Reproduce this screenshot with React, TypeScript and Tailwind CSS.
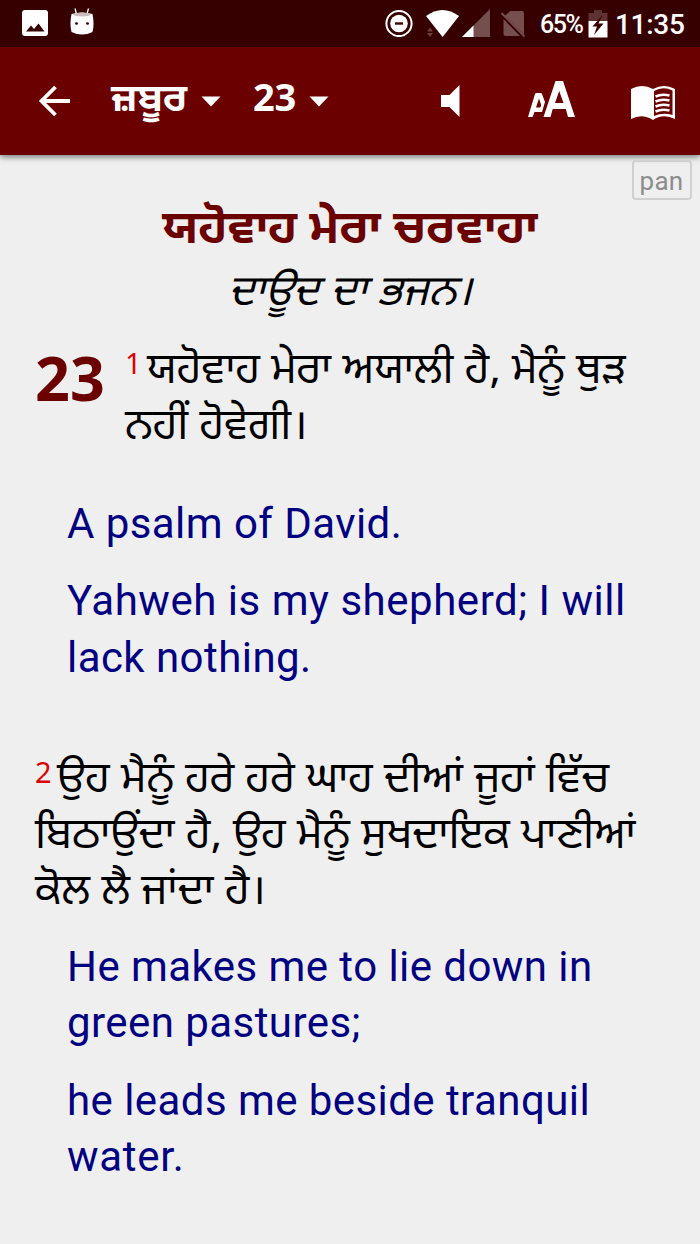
const Caret = () => (
    <svg className="block h-[11px] w-5" viewBox="0 0 20 11" fill="white">
        <path d="M0.5 0.5h19L10 10.5z" />
    </svg>
);

const StatusBar = () => (
    <div className="flex h-[47px] items-start bg-[#370000] text-white">
        <svg className="ml-[22px] mt-[10px] h-[26px] w-[26px]" viewBox="0 0 26 26">
            <rect width="26" height="26" rx="3" fill="white" />
            <path d="M4 21.500l5-6 3 3.500 4.500-5.500 6 8z" fill="#370000" />
        </svg>
        <svg className="ml-[22px] mt-2 h-[27px] w-6" viewBox="0 0 24 27" fill="white">
            <path d="M6.500 6L5 .5M17 6L18.500 .5" stroke="white" strokeWidth="1.300" />
            <path d="M1.500 6Q12 3 22.500 6Q24.500 16 22.500 24Q12 29 1.500 24Q-.5 16 1.500 6z" />
            <path d="M3 6Q12 3 21 6Q20 8.500 12 8.500Q4 8.500 3 6z" fill="#cbbcbc" />
            <ellipse cx="6.500" cy="15.500" rx="1.500" ry="1.300" fill="#370000" />
            <ellipse cx="17.500" cy="15.500" rx="1.500" ry="1.300" fill="#370000" />
        </svg>
        <svg className="ml-[291px] mt-[9px] h-7 w-7" viewBox="0 0 28 28" fill="white">
            <circle cx="14" cy="14.500" r="12.600" fill="none" stroke="white" strokeWidth="2" />
            <circle cx="14" cy="14.500" r="8.800" />
            <path d="M10 14.500h8" stroke="#370000" strokeWidth="2.400" />
        </svg>
        <svg className="ml-3 mt-[9px] h-[29px] w-[35px]" viewBox="0 0 35 29">
            <path d="M1 7Q17.500-5 34 7L17.600 28z" fill="white" />
            <path d="M2 22.500l3-4 3 4zM2 24l3 4 3-4z" fill="#6b4242" />
        </svg>
        <svg className="ml-[2px] mt-[9px] h-7 w-7" viewBox="0 0 28 28">
            <path d="M28 0v28H0z" fill="#754e4e" />
            <path d="M11.500 16.500V28H0z" fill="white" />
        </svg>
        <svg className="ml-[10px] mt-[10px] h-7 w-[26px]" viewBox="0 0 26 28">
            <path d="M10.500 1h11.500q2 0 2 2v21.500L5 5.500zM3.500 9v15q0 2 2 2H20z" fill="#754e4e" />
            <path d="M1.500 3l23 23.500" stroke="#754e4e" strokeWidth="2" />
        </svg>
        <span className="ml-[14px] mt-[9px] w-[43px] whitespace-nowrap font-['Roboto'] text-[25px] font-medium leading-8 tracking-[-1.4px]">65%</span>
        <svg className="ml-[5px] mt-[9px] h-[29px] w-5" viewBox="0 0 20 29">
            <path d="M.5 12V4H6V1h8v3h5.500v8z" fill="#5e3232" />
            <path d="M.5 12h19v16.500H.5z" fill="white" />
            <path d="M14.500 6L4.500 17.500H9L6 26l9.500-11.500h-5z" fill="#370000" />
        </svg>
        <span className="ml-[7px] mt-[9px] whitespace-nowrap font-['Roboto'] text-[28px] font-medium leading-8 tracking-[-0.3px]">11:35</span>
    </div>
);

const Toolbar = () => (
    <div className="relative flex h-[108px] items-start bg-[#6b0000] text-white shadow-[0_2px_6px_rgba(0,0,0,0.5)]">
        <svg className="ml-[38px] mt-[38px] h-8 w-8" viewBox="0 0 32 32" fill="none" stroke="white" strokeWidth="3.800">
            <path d="M32 16H4M17.500 2L3.500 16L17.500 30" />
        </svg>
        <span className="ml-[41px] mt-[27px] w-[78px] whitespace-nowrap font-['Noto_Sans_Gurmukhi','Noto_Sans',sans-serif] text-[39px] font-bold leading-[56px]">ਜ਼ਬੂਰ</span>
        <div className="ml-3 mt-[49px]"><Caret /></div>
        <span className="ml-[32px] mt-[21px] w-[44px] font-['Noto_Sans',sans-serif] text-[38px] font-bold leading-[56px] tracking-[-0.3px]">23</span>
        <div className="ml-[12px] mt-[49px]"><Caret /></div>
        <svg className="ml-[112px] mt-[38px] h-8 w-[19px]" viewBox="0 0 19 32" fill="white">
            <path d="M0 10h8.500L18.500 0v32L8.500 22H0z" />
        </svg>
        <svg className="ml-[68px] mt-[34px] h-9 w-[47px]" viewBox="0 0 47 36" fill="white" fillRule="evenodd">
            <path d="M0 36L7 13q.3-1 1.500-1h4q1.200 0 1.500 1l3 8L14 31H6.500L4.500 36zM8 26.500h4q1.500-1 1-3l-2-6z" />
            <path d="M15.500 36L27.500 0h7.500L47 36h-7l-2.200-8H24.700l-2.200 8zM27 22h8.500L31.200 10z" />
        </svg>
        <svg className="ml-[56px] mt-[39px] h-[34px] w-11" viewBox="0 0 44 34">
            <path d="M0 3Q11-3 22 3Q33-3 44 3V33Q32 27 22 34Q11 27 0 33z" fill="white" />
            <path d="M23 5Q32 0 41.500 4.500V29Q32 26 23 30z" fill="#6b0000" />
            <path d="M24.500 10.500Q31 7.500 38.500 9.500M24.500 15.500Q31 12.500 38.500 14.500M24.500 20.500Q31 17.500 38.500 19.500M24.500 25.500Q31 22.500 38.500 24.500" fill="none" stroke="white" strokeWidth="2.600" />
        </svg>
    </div>
);

export default function App() {
    return (
        <div className="flex h-[1244px] w-[700px] flex-col overflow-hidden bg-[#efefef]">
            <StatusBar />
            <Toolbar />
            <main className="relative flex-1 font-['Noto_Sans_Gurmukhi','Noto_Sans',sans-serif] text-[42.7px] leading-[56px] text-black">
                <div className="absolute right-2 top-[5px] flex h-10 w-[60px] items-center justify-center rounded border-2 border-[#d0d0d0] pr-px pt-[2px] font-['Roboto'] text-[26px] tracking-[0.3px] text-[#8c8c8c]">pan</div>
                <h1 className="whitespace-nowrap pt-[47px] text-center text-[47.2px] font-bold leading-[60px] text-[#6b0000]">ਯਹੋਵਾਹ ਮੇਰਾ ਚਰਵਾਹਾ</h1>
                <p className="mt-[5px] whitespace-nowrap text-center italic">ਦਾਊਦ ਦਾ ਭਜਨ।</p>

                <section className="mt-[22px] flex whitespace-nowrap pl-[35px]">
                    <span className="-mt-[2px] w-[90px] font-['Open_Sans'] text-[61px] font-bold leading-[70px] text-[#6b0000]">23</span>
                    <div>
                        <p className="h-14">
                            <span className="relative -top-[9px] mr-[7px] inline-block w-[15px] font-['Noto_Sans'] text-[29px] leading-none text-[#dc0000]">1</span>
                            ਯਹੋਵਾਹ ਮੇਰਾ ਅਯਾਲੀ ਹੈ, ਮੈਨੂੰ ਥੁੜ
                        </p>
                        <p>ਨਹੀਂ ਹੋਵੇਗੀ।</p>
                    </div>
                </section>

                <section className="mt-[38px] whitespace-nowrap pl-[67px] font-['Roboto'] text-[42px] leading-[57px] tracking-[0.44px] text-[#000080]">
                    <p>A psalm of David.</p>
                    <p className="mt-[20px] tracking-[0.53px]">Yahweh is my shepherd; I will</p>
                    <p>lack nothing.</p>
                </section>

                <section className="mt-[68px] whitespace-nowrap pl-[35px]">
                    <p className="h-14">
                        <span className="relative -top-[9px] mr-[6px] inline-block w-[16px] font-['Noto_Sans'] text-[29px] leading-none text-[#dc0000]">2</span>
                        ਉਹ ਮੈਨੂੰ ਹਰੇ ਹਰੇ ਘਾਹ ਦੀਆਂ ਜੂਹਾਂ ਵਿੱਚ
                    </p>
                    <p>ਬਿਠਾਉਂਦਾ ਹੈ, ਉਹ ਮੈਨੂੰ ਸੁਖਦਾਇਕ ਪਾਣੀਆਂ</p>
                    <p>ਕੋਲ ਲੈ ਜਾਂਦਾ ਹੈ।</p>
                </section>

                <section className="mt-[16px] whitespace-nowrap pl-[67px] font-['Roboto'] text-[42px] leading-[57px] tracking-[0.44px] text-[#000080]">
                    <p>He makes me to lie down in</p>
                    <p className="-mt-px">green pastures;</p>
                    <p className="mt-[21px]">he leads me beside tranquil</p>
                    <p className="-mt-px tracking-[0.7px]">water.</p>
                </section>
            </main>
        </div>
    );
}
